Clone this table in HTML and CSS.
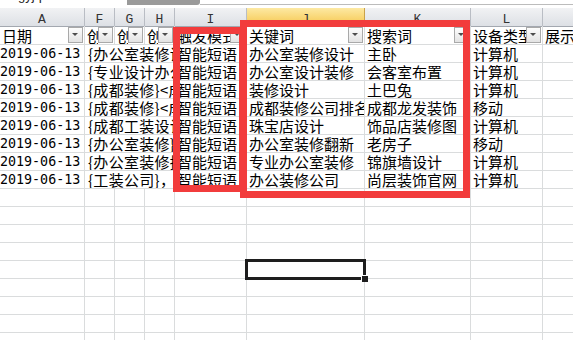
FILE: index.html
```html
<!DOCTYPE html>
<html>
<head>
<meta charset="utf-8">
<link rel="stylesheet" href="styles.css">
</head>
<body>
<div class="sheet">
  <div class="topbar">
    <div class="namebox"><span class="nametext">gyjq</span></div>
    <div class="fxbtn"></div>
    <div class="fxline"></div>
  </div>

  <div class="colheads">
    <div class="ch">A</div><div class="ch">F</div><div class="ch">G</div><div class="ch">H</div><div class="ch">I</div><div class="ch sel">J</div><div class="ch">K</div><div class="ch">L</div><div class="ch">M</div>
  </div>

  <div class="row head">
    <div class="c f"><span class="t">日期</span><span class="fb"></span></div>
    <div class="c f"><span class="t">创建</span><span class="fb"></span></div>
    <div class="c f"><span class="t">创建</span><span class="fb"></span></div>
    <div class="c f"><span class="t">创建</span><span class="fb"></span></div>
    <div class="c f"><span class="t">触发模式</span><span class="fb"></span></div>
    <div class="c f"><span class="t">关键词</span><span class="fb"></span></div>
    <div class="c f"><span class="t">搜索词</span><span class="fb"></span></div>
    <div class="c f"><span class="t">设备类型</span><span class="fb"></span></div>
    <div class="c f"><span class="t">展示次数</span><span class="fb"></span></div>
  </div>

  <div class="row data"><div class="c date">2019-06-13</div><div class="c idea">{办公室装修设计}</div><div class="c">智能短语</div><div class="c">办公室装修设计</div><div class="c">主卧</div><div class="c">计算机</div><div class="c"></div></div>
  <div class="row data"><div class="c date">2019-06-13</div><div class="c idea">{专业设计办公室}</div><div class="c">智能短语</div><div class="c">办公室设计装修</div><div class="c">会客室布置</div><div class="c">计算机</div><div class="c"></div></div>
  <div class="row data"><div class="c date">2019-06-13</div><div class="c idea">{成都装修}&lt;成都装修公司&gt;</div><div class="c">智能短语</div><div class="c">装修设计</div><div class="c">土巴兔</div><div class="c">计算机</div><div class="c"></div></div>
  <div class="row data"><div class="c date">2019-06-13</div><div class="c idea">{成都装修}&lt;成都装修公司&gt;</div><div class="c">智能短语</div><div class="c">成都装修公司排名</div><div class="c">成都龙发装饰</div><div class="c">移动</div><div class="c"></div></div>
  <div class="row data"><div class="c date">2019-06-13</div><div class="c idea">{成都工装设计}</div><div class="c">智能短语</div><div class="c">珠宝店设计</div><div class="c">饰品店装修图</div><div class="c">计算机</div><div class="c"></div></div>
  <div class="row data"><div class="c date">2019-06-13</div><div class="c idea">{办公室装修}翻新</div><div class="c">智能短语</div><div class="c">办公室装修翻新</div><div class="c">老房子</div><div class="c">移动</div><div class="c"></div></div>
  <div class="row data"><div class="c date">2019-06-13</div><div class="c idea">{办公室装修接待}</div><div class="c">智能短语</div><div class="c">专业办公室装修</div><div class="c">锦旗墙设计</div><div class="c">计算机</div><div class="c"></div></div>
  <div class="row data"><div class="c date">2019-06-13</div><div class="c idea">{工装公司}，办公</div><div class="c">智能短语</div><div class="c">办公装修公司</div><div class="c">尚层装饰官网</div><div class="c">计算机</div><div class="c"></div></div>

  <div class="row"><div class="c"></div><div class="c"></div><div class="c"></div><div class="c"></div><div class="c"></div><div class="c"></div><div class="c"></div><div class="c"></div><div class="c"></div></div>
  <div class="row"><div class="c"></div><div class="c"></div><div class="c"></div><div class="c"></div><div class="c"></div><div class="c"></div><div class="c"></div><div class="c"></div><div class="c"></div></div>
  <div class="row"><div class="c"></div><div class="c"></div><div class="c"></div><div class="c"></div><div class="c"></div><div class="c"></div><div class="c"></div><div class="c"></div><div class="c"></div></div>
  <div class="row"><div class="c"></div><div class="c"></div><div class="c"></div><div class="c"></div><div class="c"></div><div class="c"></div><div class="c"></div><div class="c"></div><div class="c"></div></div>
  <div class="row"><div class="c"></div><div class="c"></div><div class="c"></div><div class="c"></div><div class="c"></div><div class="c"></div><div class="c"></div><div class="c"></div><div class="c"></div></div>
  <div class="row"><div class="c"></div><div class="c"></div><div class="c"></div><div class="c"></div><div class="c"></div><div class="c"></div><div class="c"></div><div class="c"></div><div class="c"></div></div>
  <div class="row"><div class="c"></div><div class="c"></div><div class="c"></div><div class="c"></div><div class="c"></div><div class="c"></div><div class="c"></div><div class="c"></div><div class="c"></div></div>
  <div class="row"><div class="c"></div><div class="c"></div><div class="c"></div><div class="c"></div><div class="c"></div><div class="c"></div><div class="c"></div><div class="c"></div><div class="c"></div></div>
  <div class="row"><div class="c"></div><div class="c"></div><div class="c"></div><div class="c"></div><div class="c"></div><div class="c"></div><div class="c"></div><div class="c"></div><div class="c"></div></div>

  <div class="mark mark-mode"></div>
  <div class="mark mark-words"></div>
  <div class="selcell"><span class="handle"></span></div>
</div>
</body>
</html>
```

FILE: styles.css
```css
* { box-sizing: border-box; }
html, body { margin: 0; padding: 0; background: #fff; }
body {
  font-family: "Noto Sans CJK SC", sans-serif;
  font-size: 15px;
  color: #000;
}
.sheet {
  position: relative;
  width: 573px;
  height: 340px;
  overflow: hidden;
}

/* top strip (formula bar remnant) */
.topbar {
  height: 8px;
  display: flex;
  align-items: flex-start;
}
.namebox {
  width: 127px;
  height: 4px;
  overflow: hidden;
  padding-left: 18px;
}
.nametext {
  display: block;
  margin-top: -11px;
  font-family: "Liberation Sans", sans-serif;
  font-size: 13px;
  line-height: 14px;
  color: #222;
}
.fxbtn {
  width: 73px;
  height: 5px;
  background: #9a9a9a;
  border-bottom-right-radius: 3px;
}
.fxline {
  flex: 1;
  height: 5px;
  border-bottom: 1px solid #bcbcbc;
}

/* column headers */
.colheads {
  display: grid;
  grid-template-columns: 85px 30px 30px 30px 72px 118px 106px 72px 80px;
  height: 18px;
}
.ch {
  background: linear-gradient(#f1f2f4, #dde0e5);
  border-right: 1px solid #b9bdc4;
  border-bottom: 1px solid #a3a8b0;
  font-family: "Liberation Mono", monospace;
  font-size: 13px;
  color: #333;
  text-align: center;
  line-height: 13px;
  padding-top: 5px;
}
.ch.sel {
  background: linear-gradient(#fde9a3, #f5c64c);
  border-right-color: #c9a24a;
  border-bottom-color: #c69a3c;
}

/* rows */
.row {
  display: grid;
  grid-template-columns: 85px 30px 30px 30px 72px 118px 106px 72px 80px;
  height: 18px;
}
.row.head { height: 19px; }
.row.data {
  grid-template-columns: 85px 90px 72px 118px 106px 72px 80px;
}
.c {
  border-right: 1px solid #dadcdd;
  border-bottom: 1px solid #dadcdd;
  overflow: hidden;
  white-space: nowrap;
  padding-left: 2px;
  line-height: 17px;
}
.c.date {
  font-family: "DejaVu Sans Mono", monospace;
  font-size: 13.33px;
  padding-left: 0;
}
.c.idea {
  padding-left: 3px;
  letter-spacing: 0.3px;
}
.c.f {
  display: flex;
  align-items: center;
}
.t {
  flex: 1;
  min-width: 0;
  overflow: hidden;
}
.fb {
  flex: none;
  position: relative;
  width: 15px;
  height: 16px;
  margin-right: 1px;
  border: 1px solid #a9a9a9;
  background: linear-gradient(#fdfdfd, #e3e3e3);
}
.fb::after {
  content: "";
  position: absolute;
  left: 3px;
  top: 5px;
  border-left: 3px solid transparent;
  border-right: 3px solid transparent;
  border-top: 3px solid #4d4d4d;
}

/* red highlight frames */
.mark {
  position: absolute;
  border: 7px solid #f23c3c;
}
.mark-mode { left: 173px; top: 27px; width: 73px; height: 165px; }
.mark-words { left: 240px; top: 20px; width: 230px; height: 178px; }

/* selected cell */
.selcell {
  position: absolute;
  left: 245px;
  top: 259px;
  width: 121px;
  height: 21px;
  border: 3px solid #1e1e1e;
}
.handle {
  position: absolute;
  left: 113px;
  top: 13px;
  width: 7px;
  height: 7px;
  background: #1e1e1e;
  border-left: 1px solid #fff;
  border-top: 1px solid #fff;
}
```
